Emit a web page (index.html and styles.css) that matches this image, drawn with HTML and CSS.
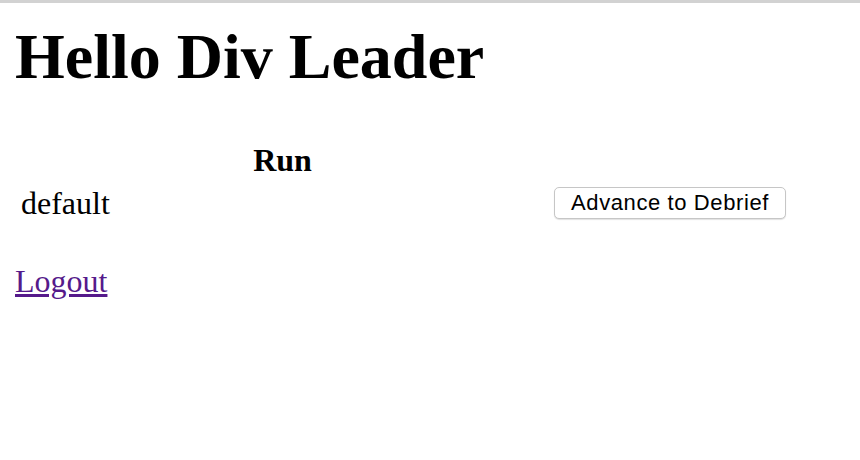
FILE: index.html
```html
<!DOCTYPE html>
<html>
<head>
<meta charset="utf-8">
<title>Div Leader</title>
<link rel="stylesheet" href="styles.css">
</head>
<body>
<h1 class="title">Hello Div Leader</h1>
<table class="runs">
  <thead>
    <tr><th class="col-run">Run</th><th class="col-action"></th></tr>
  </thead>
  <tbody>
    <tr>
      <td class="col-run">default</td>
      <td class="col-action"><button class="btn" type="button">Advance to Debrief</button></td>
    </tr>
  </tbody>
</table>
<p class="logout"><a class="logout-link" href="#">Logout</a></p>
</body>
</html>
```

FILE: styles.css
```css
html {
  border-top: 3px solid #d2d2d2;
  background: #fff;
}
body {
  margin: 17px 15px 15px 15px;
  font-family: "Liberation Serif", "Times New Roman", serif;
  font-size: 32px;
  color: #000;
}
.title {
  font-size: 64px;
  font-weight: bold;
  margin: 0 0 44px 0;
  line-height: normal;
}
.runs {
  border-collapse: separate;
  border-spacing: 2px;
}
.runs th,
.runs td {
  padding: 2px 4px;
}
.runs th {
  font-weight: bold;
  text-align: center;
}
.runs td {
  text-align: left;
}
.col-run {
  width: 523px;
}
.btn {
  vertical-align: top;
  margin-top: 2px;
  width: 232px;
  height: 32px;
  padding: 0;
  background: #fff;
  border: 1px solid #c6c6c6;
  border-radius: 5px;
  box-shadow: 0 1px 1px rgba(0, 0, 0, 0.12);
  font-family: "Liberation Sans", Arial, sans-serif;
  font-size: 22px;
  letter-spacing: 0.6px;
  color: #000;
}
.logout {
  margin: 37px 0 0 0;
}
.logout-link {
  color: #551a8b;
  text-decoration: underline;
}
```
